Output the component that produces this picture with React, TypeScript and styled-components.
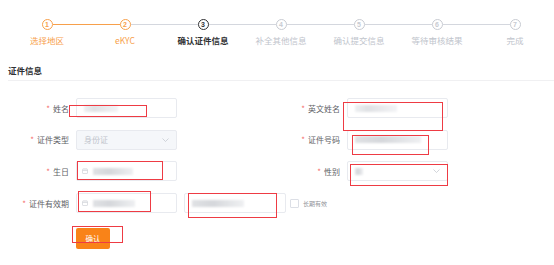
import { createGlobalStyle, styled } from 'styled-components';

const GlobalStyle = createGlobalStyle`
  html, body { margin: 0; padding: 0; background: #fff; }
  body { font-family: "Noto Sans CJK SC", "Noto Sans", sans-serif; }
`;

type StepState = 'done' | 'current' | 'todo';

const steps: { label: string; state: StepState }[] = [
  { label: '选择地区', state: 'done' },
  { label: 'eKYC', state: 'done' },
  { label: '确认证件信息', state: 'current' },
  { label: '补全其他信息', state: 'todo' },
  { label: '确认提交信息', state: 'todo' },
  { label: '等待审核结果', state: 'todo' },
  { label: '完成', state: 'todo' },
];

// red annotation boxes drawn over the screenshot
const marks = [
  [69, 105, 78, 12],
  [343, 102, 100, 29],
  [352, 135, 77, 20],
  [77, 161, 86, 19],
  [350, 164, 98, 22],
  [78, 191, 73, 21],
  [188, 193, 89, 25],
  [72, 226, 51, 17],
];

const CalendarIcon = () => (
  <svg width="6" height="6" viewBox="0 0 12 12" fill="none" stroke="#d0d3d9" strokeWidth="1.4">
    <rect x="1" y="2" width="10" height="9" rx="1" />
    <path d="M1 5h10M4 1v2M8 1v2" />
  </svg>
);

const Chevron = () => (
  <svg width="7" height="4" viewBox="0 0 14 8" fill="none" stroke="#c0c4cc" strokeWidth="1.4">
    <path d="M1 1l6 6 6-6" />
  </svg>
);

export default function App() {
  return (
    <Page>
      <GlobalStyle />
      <Stepper>
        {steps.map((s, i) => (
          <Step key={s.label}>
            <Track>
              <Line $hidden={i === 0} $active={i <= 1} />
              <Circle $state={s.state}>{i + 1}</Circle>
              <Line $hidden={i === steps.length - 1} $active={i === 0} />
            </Track>
            <StepLabel $state={s.state}>{s.label}</StepLabel>
          </Step>
        ))}
      </Stepper>

      <SectionTitle>证件信息</SectionTitle>

      <FormGrid>
        <FormItem>
          <Label>姓名</Label>
          <Input>
            <Blur $w={34} />
          </Input>
        </FormItem>
        <FormItem>
          <Label>英文姓名</Label>
          <Input>
            <Blur $w={42} />
          </Input>
        </FormItem>

        <FormItem>
          <Label>证件类型</Label>
          <Input $disabled>
            <Value>身份证</Value>
            <Chevron />
          </Input>
        </FormItem>
        <FormItem>
          <Label>证件号码</Label>
          <Input>
            <Blur $w={66} $dark />
          </Input>
        </FormItem>

        <FormItem>
          <Label>生日</Label>
          <Input>
            <CalendarIcon />
            <Blur $w={40} $dark />
          </Input>
        </FormItem>
        <FormItem>
          <Label>性别</Label>
          <Input>
            <Blur $w={8} $dark />
            <Chevron />
          </Input>
        </FormItem>

        <FormItem $wide>
          <Label>证件有效期</Label>
          <Input>
            <CalendarIcon />
            <Blur $w={42} $dark />
          </Input>
          <Input $width={102}>
            <Blur $w={52} $dark />
          </Input>
          <Check>
            <Box />
            <CheckText>长期有效</CheckText>
          </Check>
        </FormItem>
      </FormGrid>

      <Actions>
        <Button>确认</Button>
      </Actions>

      {marks.map(([x, y, w, h]) => (
        <Mark key={`${x}-${y}`} style={{ left: x, top: y, width: w, height: h }} />
      ))}
    </Page>
  );
}

const Page = styled.div`
  position: relative;
  width: 554px;
  height: 265px;
  overflow: hidden;
  background: #fff;
`;

const Stepper = styled.div`
  display: flex;
  padding: 19px 0 0 8px;
`;

const Step = styled.div`
  flex: 1;
  display: flex;
  flex-direction: column;
  align-items: center;
`;

const Track = styled.div`
  width: 100%;
  display: flex;
  align-items: center;
`;

const Line = styled.div<{ $hidden?: boolean; $active?: boolean }>`
  flex: 1;
  height: 1px;
  background: ${(p) => (p.$hidden ? 'transparent' : p.$active ? '#f7a04b' : '#d4d7de')};
`;

const stepColor = (s: StepState) =>
  s === 'done' ? '#f7a04b' : s === 'current' ? '#303133' : '#c8cbd2';

const Circle = styled.div<{ $state: StepState }>`
  width: 11px;
  height: 11px;
  box-sizing: border-box;
  border-radius: 50%;
  border: 1.3px solid ${(p) => stepColor(p.$state)};
  color: ${(p) => stepColor(p.$state)};
  font-size: 7px;
  font-weight: 700;
  line-height: 9px;
  text-align: center;
  font-family: "Liberation Sans", sans-serif;
`;

const StepLabel = styled.div<{ $state: StepState }>`
  margin-top: 5px;
  font-size: 8.5px;
  line-height: 11px;
  color: ${(p) => (p.$state === 'done' ? '#f7a04b' : p.$state === 'current' ? '#303133' : '#c0c4cc')};
  font-weight: ${(p) => (p.$state === 'current' ? 700 : 400)};
`;

const SectionTitle = styled.div`
  margin: 19px 0 0 8px;
  padding-bottom: 4px;
  border-bottom: 1px solid #f0f0f2;
  font-size: 8.5px;
  line-height: 11px;
  font-weight: 700;
  color: #303133;
`;

const FormGrid = styled.div`
  display: grid;
  grid-template-columns: 271px 1fr;
  row-gap: 11.7px;
  margin-top: 17px;
`;

const FormItem = styled.div<{ $wide?: boolean }>`
  display: flex;
  align-items: center;
  gap: 7px;
  grid-column: ${(p) => (p.$wide ? '1 / -1' : 'auto')};
`;

const Label = styled.div`
  width: 76px;
  margin-right: -7px;
  padding-right: 7px;
  box-sizing: border-box;
  text-align: right;
  font-size: 8px;
  color: #606266;
  &::before {
    content: '*';
    color: #f56c6c;
    margin-right: 3px;
  }
`;

const Input = styled.div<{ $disabled?: boolean; $width?: number }>`
  width: ${(p) => p.$width ?? 101}px;
  height: 20px;
  box-sizing: border-box;
  border: 1px solid #e8eaef;
  border-radius: 2px;
  background: ${(p) => (p.$disabled ? '#f5f7fa' : '#fff')};
  display: flex;
  align-items: center;
  gap: 3px;
  padding: 0 7px 0 5px;
  & > svg:last-child:not(:first-child) {
    margin-left: auto;
  }
`;

const Value = styled.span`
  font-size: 8px;
  color: #c0c4cc;
  padding-left: 2px;
`;

const Blur = styled.span<{ $w: number; $dark?: boolean }>`
  width: ${(p) => p.$w}px;
  height: 7px;
  margin-left: 2px;
  background: ${(p) =>
    p.$dark
      ? 'linear-gradient(90deg, #e0e2e5 0%, #d5d7db 40%, #e2e4e7 70%, #eff0f2 100%)'
      : 'linear-gradient(90deg, #eef0f2 0%, #dfe1e4 30%, #e8e9ec 60%, #f3f4f6 100%)'};
  filter: blur(1.2px);
`;

const Check = styled.label`
  display: flex;
  align-items: center;
  gap: 4px;
  margin-left: -3px;
`;

const Box = styled.span`
  width: 7px;
  height: 7px;
  border: 1px solid #dcdfe6;
  border-radius: 1px;
  background: #fff;
`;

const CheckText = styled.span`
  font-size: 6px;
  color: #909399;
`;

const Actions = styled.div`
  padding: 10px 0 0 76px;
`;

const Button = styled.button`
  width: 34px;
  height: 21px;
  border: none;
  border-radius: 2px;
  background: #f98318;
  color: #fff;
  font-size: 7.5px;
  font-family: inherit;
  padding: 0;
`;

const Mark = styled.div`
  position: absolute;
  box-sizing: border-box;
  border: 1.5px solid #ee3b44;
  pointer-events: none;
`;
